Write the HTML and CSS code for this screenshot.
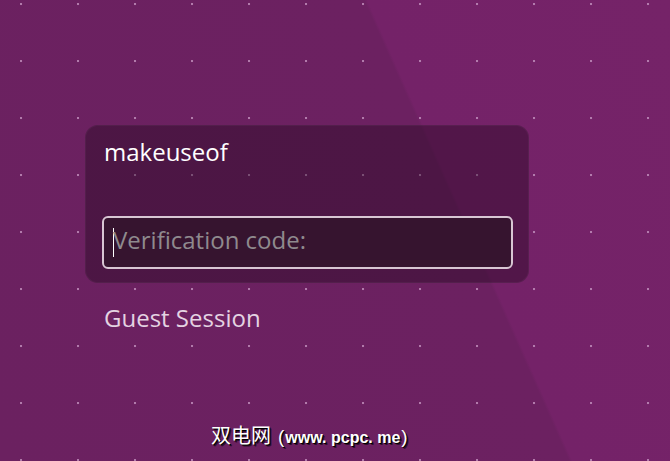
FILE: index.html
```html
<!DOCTYPE html>
<html>
<head>
<meta charset="utf-8">
<link rel="stylesheet" href="styles.css">
</head>
<body>
<main class="screen">
  <section class="card">
    <div class="user">makeuseof</div>
    <div class="field">
      <span class="cursor"></span>
      <span class="placeholder">Verification code:</span>
    </div>
  </section>
  <div class="guest">Guest Session</div>
  <div class="watermark"><span class="cn">双电网</span><span class="paren open">(</span>www. pcpc. me<span class="paren">)</span></div>
</main>
</body>
</html>
```
FILE: styles.css
```css
html, body {
  margin: 0;
  padding: 0;
}
body {
  width: 670px;
  height: 461px;
  overflow: hidden;
  font-family: "Open Sans", "Noto Sans", sans-serif;
}
.screen {
  position: relative;
  width: 670px;
  height: 461px;
  box-sizing: border-box;
  padding: 125px 0 0 85px;
  background-color: #6c2161;
  background-image:
    radial-gradient(circle at 1px 1px, rgba(195, 145, 190, 0.8) 1px, transparent 1.6px),
    linear-gradient(66deg, #6b2160 0, #6c2161 520px, #742268 523px, #752368 800px);
  background-size: 57px 57px, 100% 100%;
  background-position: 20px 3px, 0 0;
}
.card {
  width: 444px;
  height: 158px;
  box-sizing: border-box;
  border-radius: 13px;
  background: rgba(22, 4, 20, 0.36);
  box-shadow: inset 0 0 0 1px rgba(255, 255, 255, 0.04);
  padding: 13px 16px 14px 17px;
  display: flex;
  flex-direction: column;
  justify-content: space-between;
}
.user {
  color: #ffffff;
  font-size: 24px;
  line-height: 28px;
  padding-left: 2px;
}
.field {
  height: 53px;
  box-sizing: border-box;
  border: 2px solid #d8c6d3;
  border-radius: 6px;
  background: #36142f;
  display: flex;
  align-items: center;
  padding-left: 9px;
  padding-bottom: 5px;
}
.cursor {
  width: 1px;
  height: 29px;
  background: #ffffff;
  margin-right: -1px;
  margin-top: 4px;
}
.placeholder {
  color: #8f8a8e;
  font-size: 24px;
  line-height: 28px;
}
.guest {
  margin: 21px 0 0 19px;
  color: #e4d3e2;
  font-size: 24px;
  line-height: 28px;
}
.watermark {
  position: absolute;
  left: 211px;
  top: 422px;
  color: #ffffff;
  font-family: "Liberation Sans", "Noto Sans CJK SC", sans-serif;
  font-size: 16px;
  font-weight: bold;
  line-height: 26px;
  text-shadow: 1px 1px 0 #000, 2px 2px 0 rgba(0, 0, 0, 0.55);
}
.cn {
  font-family: "Noto Sans CJK SC", sans-serif;
  font-size: 20px;
  font-weight: normal;
}
.paren {
  font-size: 19px;
  font-weight: normal;
  margin: 0 1px;
}
.paren.open {
  margin-left: 7px;
}
```
